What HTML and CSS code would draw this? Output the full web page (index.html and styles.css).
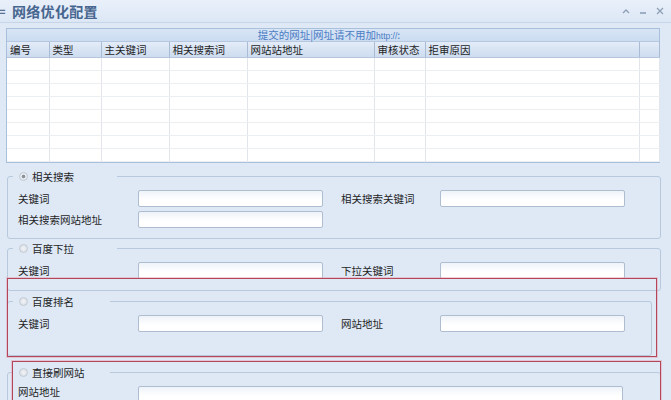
FILE: index.html
```html
<!DOCTYPE html>
<html lang="zh-CN">
<head>
  <meta charset="UTF-8">
  <title>网络优化配置</title>
  <link rel="stylesheet" href="styles.css">
</head>
<body>

<div class="titlebar">
  <span class="menu-icon">=</span>
  <span class="title">网络优化配置</span>
  <div class="win-btns">
    <svg width="10" height="8" viewBox="0 0 10 8"><path d="M2 6 L5 3 L8 6" fill="none" stroke="#8fa0b6" stroke-width="1.4"/></svg>
    <svg width="10" height="8" viewBox="0 0 10 8"><path d="M2 6 H8" fill="none" stroke="#8fa0b6" stroke-width="1.6"/></svg>
    <svg width="10" height="10" viewBox="0 0 10 10"><path d="M2 2 L8 8 M8 2 L2 8" fill="none" stroke="#8fa0b6" stroke-width="1.3"/></svg>
  </div>
</div>

<!-- submitted urls grid -->
<div class="grid">
  <div class="grid-caption">提交的网址|网址请不用加<span class="latin">http://</span>:</div>
  <table class="grid-table">
    <colgroup>
      <col style="width:42px"><col style="width:52px"><col style="width:68px"><col style="width:78px">
      <col style="width:127px"><col style="width:51px"><col style="width:214px"><col style="width:20px">
    </colgroup>
    <thead>
      <tr><th>编号</th><th>类型</th><th>主关键词</th><th>相关搜索词</th><th>网站站地址</th><th>审核状态</th><th>拒审原因</th><th></th></tr>
    </thead>
    <tbody>
      <tr><td></td><td></td><td></td><td></td><td></td><td></td><td></td><td></td></tr>
      <tr><td></td><td></td><td></td><td></td><td></td><td></td><td></td><td></td></tr>
      <tr><td></td><td></td><td></td><td></td><td></td><td></td><td></td><td></td></tr>
      <tr><td></td><td></td><td></td><td></td><td></td><td></td><td></td><td></td></tr>
      <tr><td></td><td></td><td></td><td></td><td></td><td></td><td></td><td></td></tr>
      <tr><td></td><td></td><td></td><td></td><td></td><td></td><td></td><td></td></tr>
      <tr><td></td><td></td><td></td><td></td><td></td><td></td><td></td><td></td></tr>
      <tr><td></td><td></td><td></td><td></td><td></td><td></td><td></td><td></td></tr>
    </tbody>
  </table>
</div>

<fieldset class="group group-related">
  <legend><span class="radio checked"></span>相关搜索</legend>
  <div class="form-row">
    <label>关键词</label><input class="field" type="text">
    <span></span>
    <label>相关搜索关键词</label><input class="field" type="text">
  </div>
  <div class="form-row">
    <label>相关搜索网站地址</label><input class="field" type="text">
  </div>
</fieldset>

<fieldset class="group group-dropdown">
  <legend><span class="radio"></span>百度下拉</legend>
  <div class="form-row">
    <label>关键词</label><input class="field" type="text">
    <span></span>
    <label>下拉关键词</label><input class="field" type="text">
  </div>
</fieldset>

<fieldset class="group group-rank">
  <legend class="short"><span class="radio"></span>百度排名</legend>
  <div class="form-row">
    <label>关键词</label><input class="field" type="text">
    <span></span>
    <label>网站地址</label><input class="field" type="text">
  </div>
</fieldset>

<fieldset class="group group-direct">
  <legend class="short"><span class="radio"></span>直接刷网站</legend>
  <div class="form-row">
    <label class="top">网站地址</label><input class="field wide" type="text">
  </div>
</fieldset>

<!-- red annotation boxes drawn over the screenshot -->
<div class="mark mark-rank"></div>
<div class="mark mark-direct"></div>

</body>
</html>
```

FILE: styles.css
```css
body {
  margin: 0;
  width: 671px;
  height: 400px;
  overflow: hidden;
  position: relative;
  background: #dfe9f6;
  font-family: "Noto Sans CJK SC", "Liberation Sans", sans-serif;
  font-size: 10.5px;
  color: #1e1e1e;
}
.titlebar {
  height: 22px;
  display: flex;
  align-items: center;
  background: linear-gradient(#e9f0fa, #dce7f5);
  border-bottom: 1px solid #c6d5e8;
}
.menu-icon {
  width: 8px;
  margin-left: -1px;
  color: #5a7094;
  font-size: 11px;
  font-weight: bold;
}
.title {
  margin-left: 5px;
  font-size: 14px;
  font-weight: bold;
  color: #46658f;
  letter-spacing: 0.3px;
}
.win-btns {
  margin-left: auto;
  margin-right: 6px;
  display: flex;
  align-items: center;
  gap: 7px;
}
.grid {
  margin: 5px 11px 0 6px;
  border: 1px solid #a9c0dc;
  background: #fff;
}
.grid-caption {
  height: 12px;
  line-height: 12px;
  text-align: center;
  color: #4a7cc4;
  background: linear-gradient(#d8e5f5, #cbdcf1);
  border-bottom: 1px solid #b5c8e0;
  padding-right: 8px;
}
.grid-caption .latin {
  font-family: "Liberation Sans", sans-serif;
  font-size: 8.5px;
}
.grid-table {
  border-collapse: collapse;
  table-layout: fixed;
  width: 652px;
}
.grid-table th {
  height: 15px;
  padding: 0 0 0 3px;
  text-align: left;
  font-weight: normal;
  line-height: 14px;
  background: linear-gradient(#e3ecf8, #cddcef);
  border-right: 1px solid #a9bcd3;
  border-bottom: 1px solid #b5c6dc;
}
.grid-table td {
  height: 12px;
  padding: 0;
  border-right: 1px solid #e2e6ec;
  border-bottom: 1px solid #eceff2;
}
.group {
  margin: 7px 10px 0 7px;
  padding: 7px 10px 10px 10px;
  border: 1px solid #b8c9de;
  border-radius: 3px;
  min-width: 0;
}
.group legend {
  margin-left: -5px;
  width: 104px;
  box-sizing: border-box;
  padding: 0 0 0 6px;
  height: 13px;
  line-height: 13px;
  display: flex;
  align-items: center;
  gap: 4px;
}
.group legend.short {
  width: 97px;
}
.group-dropdown {
  margin-top: 3px;
  padding-bottom: 11px;
}
.group-rank {
  margin-top: 4px;
  margin-right: 19px;
  padding-bottom: 23px;
}
.group-direct {
  margin-top: 10px;
}
.radio {
  width: 7px;
  height: 7px;
  border-radius: 50%;
  border: 1px solid #c4cad3;
  background: radial-gradient(circle, #f2f4f7, #d4dae2);
  flex: none;
}
.radio.checked {
  background: radial-gradient(circle, #8c939c 0, #8c939c 1.6px, #eef1f5 2.2px, #d0d6de 100%);
}
.form-row {
  display: grid;
  grid-template-columns: 120px 185px 18px 99px 185px;
  align-items: center;
}
.form-row + .form-row {
  margin-top: 4px;
}
.form-row label {
  line-height: 17px;
}
.form-row label.top {
  align-self: start;
  line-height: 12px;
}
.field {
  box-sizing: border-box;
  height: 17px;
  margin: 0;
  border: 1px solid #aebdd0;
  border-radius: 2px;
  background: linear-gradient(#eef3f9, #ffffff 60%);
}
.field.wide {
  grid-column: 2 / 6;
  width: 485px;
}
.mark {
  position: absolute;
  border: 1px solid #b4465a;
  box-shadow: 0 0 0 1px rgba(230, 150, 170, 0.45);
  pointer-events: none;
}
.mark-rank {
  left: 7px;
  top: 278px;
  width: 648px;
  height: 77px;
}
.mark-direct {
  left: 12px;
  top: 361px;
  width: 647px;
  height: 60px;
}
```
